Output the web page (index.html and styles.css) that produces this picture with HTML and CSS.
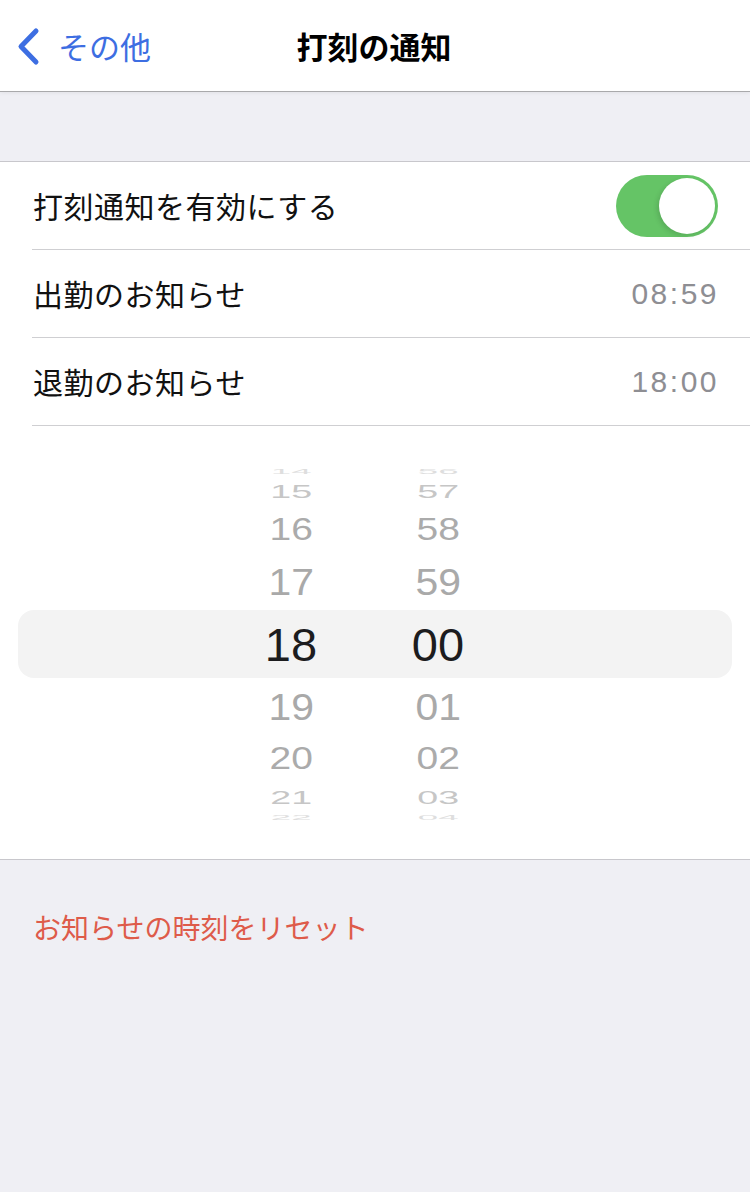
FILE: index.html
```html
<!DOCTYPE html>
<html lang="ja">
<head>
<meta charset="utf-8">
<link rel="stylesheet" href="styles.css">
</head>
<body>
<header class="nav">
  <div class="back">
    <svg class="chev" width="26" height="40" viewBox="0 0 26 40"><path d="M20 4 L5 19.5 L20 35" fill="none" stroke="#3d6ee2" stroke-width="5" stroke-linecap="round" stroke-linejoin="round"/></svg>
    <span class="back-label">その他</span>
  </div>
  <div class="title">打刻の通知</div>
</header>
<div class="spacer"></div>
<section class="group">
  <div class="row"><div class="row-in"><span class="label">打刻通知を有効にする</span><span class="switch"><span class="knob"></span></span></div></div>
  <div class="row"><div class="row-in"><span class="label">出勤のお知らせ</span><span class="value">08:59</span></div></div>
  <div class="row"><div class="row-in"><span class="label">退勤のお知らせ</span><span class="value">18:00</span></div></div>
  <div class="picker">
    <div class="p-row r4"><span class="cell"><span class="d">14</span></span><span class="cell"><span class="d">56</span></span></div>
    <div class="p-row r3"><span class="cell"><span class="d">15</span></span><span class="cell"><span class="d">57</span></span></div>
    <div class="p-row r2"><span class="cell"><span class="d">16</span></span><span class="cell"><span class="d">58</span></span></div>
    <div class="p-row r1"><span class="cell"><span class="d">17</span></span><span class="cell"><span class="d">59</span></span></div>
    <div class="p-row sel"><span class="cell"><span class="d">18</span></span><span class="cell"><span class="d">00</span></span></div>
    <div class="p-row r1"><span class="cell"><span class="d">19</span></span><span class="cell"><span class="d">01</span></span></div>
    <div class="p-row r2"><span class="cell"><span class="d">20</span></span><span class="cell"><span class="d">02</span></span></div>
    <div class="p-row r3"><span class="cell"><span class="d">21</span></span><span class="cell"><span class="d">03</span></span></div>
    <div class="p-row r4"><span class="cell"><span class="d">22</span></span><span class="cell"><span class="d">04</span></span></div>
  </div>
</section>
<div class="reset">お知らせの時刻をリセット</div>
</body>
</html>
```
FILE: styles.css
```css
html, body {
  margin: 0;
  padding: 0;
}
body {
  background: #efeff4;
  min-height: 1192px;
  font-family: "Noto Sans CJK JP", "Liberation Sans", sans-serif;
  color: #111;
}
.nav {
  height: 91px;
  background: #fff;
  border-bottom: 1px solid #a9a9ab;
  box-shadow: 0 1px 4px rgba(0, 0, 0, 0.06);
  display: flex;
  align-items: center;
  justify-content: center;
  position: relative;
}
.back {
  position: absolute;
  left: 16px;
  top: 0;
  height: 91px;
  display: flex;
  align-items: center;
  gap: 16px;
}
.chev {
  display: block;
  margin-top: 2px;
}
.back-label {
  font-size: 31px;
  color: #3d6ee2;
  line-height: 91px;
}
.title {
  font-size: 31px;
  font-weight: 700;
  color: #000;
  line-height: 91px;
  margin-left: -2px;
}
.spacer {
  height: 69px;
}
.group {
  background: #fff;
  border-top: 1px solid #c8c7cc;
  border-bottom: 1px solid #c8c7cc;
}
.row {
  height: 88px;
}
.row-in {
  margin-left: 32px;
  height: 87px;
  border-bottom: 1px solid #cfcfd2;
  display: flex;
  align-items: center;
  justify-content: space-between;
  padding-right: 32px;
}
.label {
  font-size: 30px;
  color: #111;
  margin-left: 1px;
  letter-spacing: 0.5px;
  padding-bottom: 2px;
}
.value {
  font-family: "Liberation Sans", "Noto Sans CJK JP", sans-serif;
  font-size: 30px;
  color: #8e8e93;
  letter-spacing: 2.5px;
  margin-right: -1px;
}
.switch {
  width: 102px;
  height: 62px;
  border-radius: 31px;
  background: #65c466;
  display: flex;
  align-items: center;
  justify-content: flex-end;
  padding: 0 3px;
  box-sizing: border-box;
}
.knob {
  width: 56px;
  height: 56px;
  border-radius: 50%;
  background: #fff;
  box-shadow: -2px 2px 5px rgba(0, 0, 0, 0.12);
}
.picker {
  padding: 40px 0 37px;
  display: flex;
  flex-direction: column;
}
.p-row {
  display: flex;
  justify-content: center;
  align-items: center;
  padding-right: 21px;
  overflow: hidden;
  font-family: "Liberation Sans", sans-serif;
  font-size: 47px;
  line-height: 1;
}
.cell {
  width: 147px;
  text-align: center;
}
.d {
  display: inline-block;
  transform-origin: center;
}
.sel {
  height: 68px;
  margin: 0 18px;
  background: #f3f3f3;
  border-radius: 16px;
  color: #1c1c1e;
}
.r1 {
  height: 57px;
  color: #a9a9a9;
}
.r1 .d {
  transform: scale(0.87, 0.8);
}
.r2 {
  height: 47px;
  color: #ababab;
}
.r2 .d {
  transform: scale(0.83, 0.66);
}
.r3 {
  height: 30px;
  color: #c6c6c6;
}
.r3 .d {
  transform: scale(0.8, 0.4);
}
.r4 {
  height: 10px;
  color: #dedede;
}
.r4 .d {
  transform: scale(0.78, 0.14);
}
.reset {
  padding: 47px 0 0 33px;
  line-height: 40px;
  font-size: 28px;
  color: #de5b4a;
}
```
